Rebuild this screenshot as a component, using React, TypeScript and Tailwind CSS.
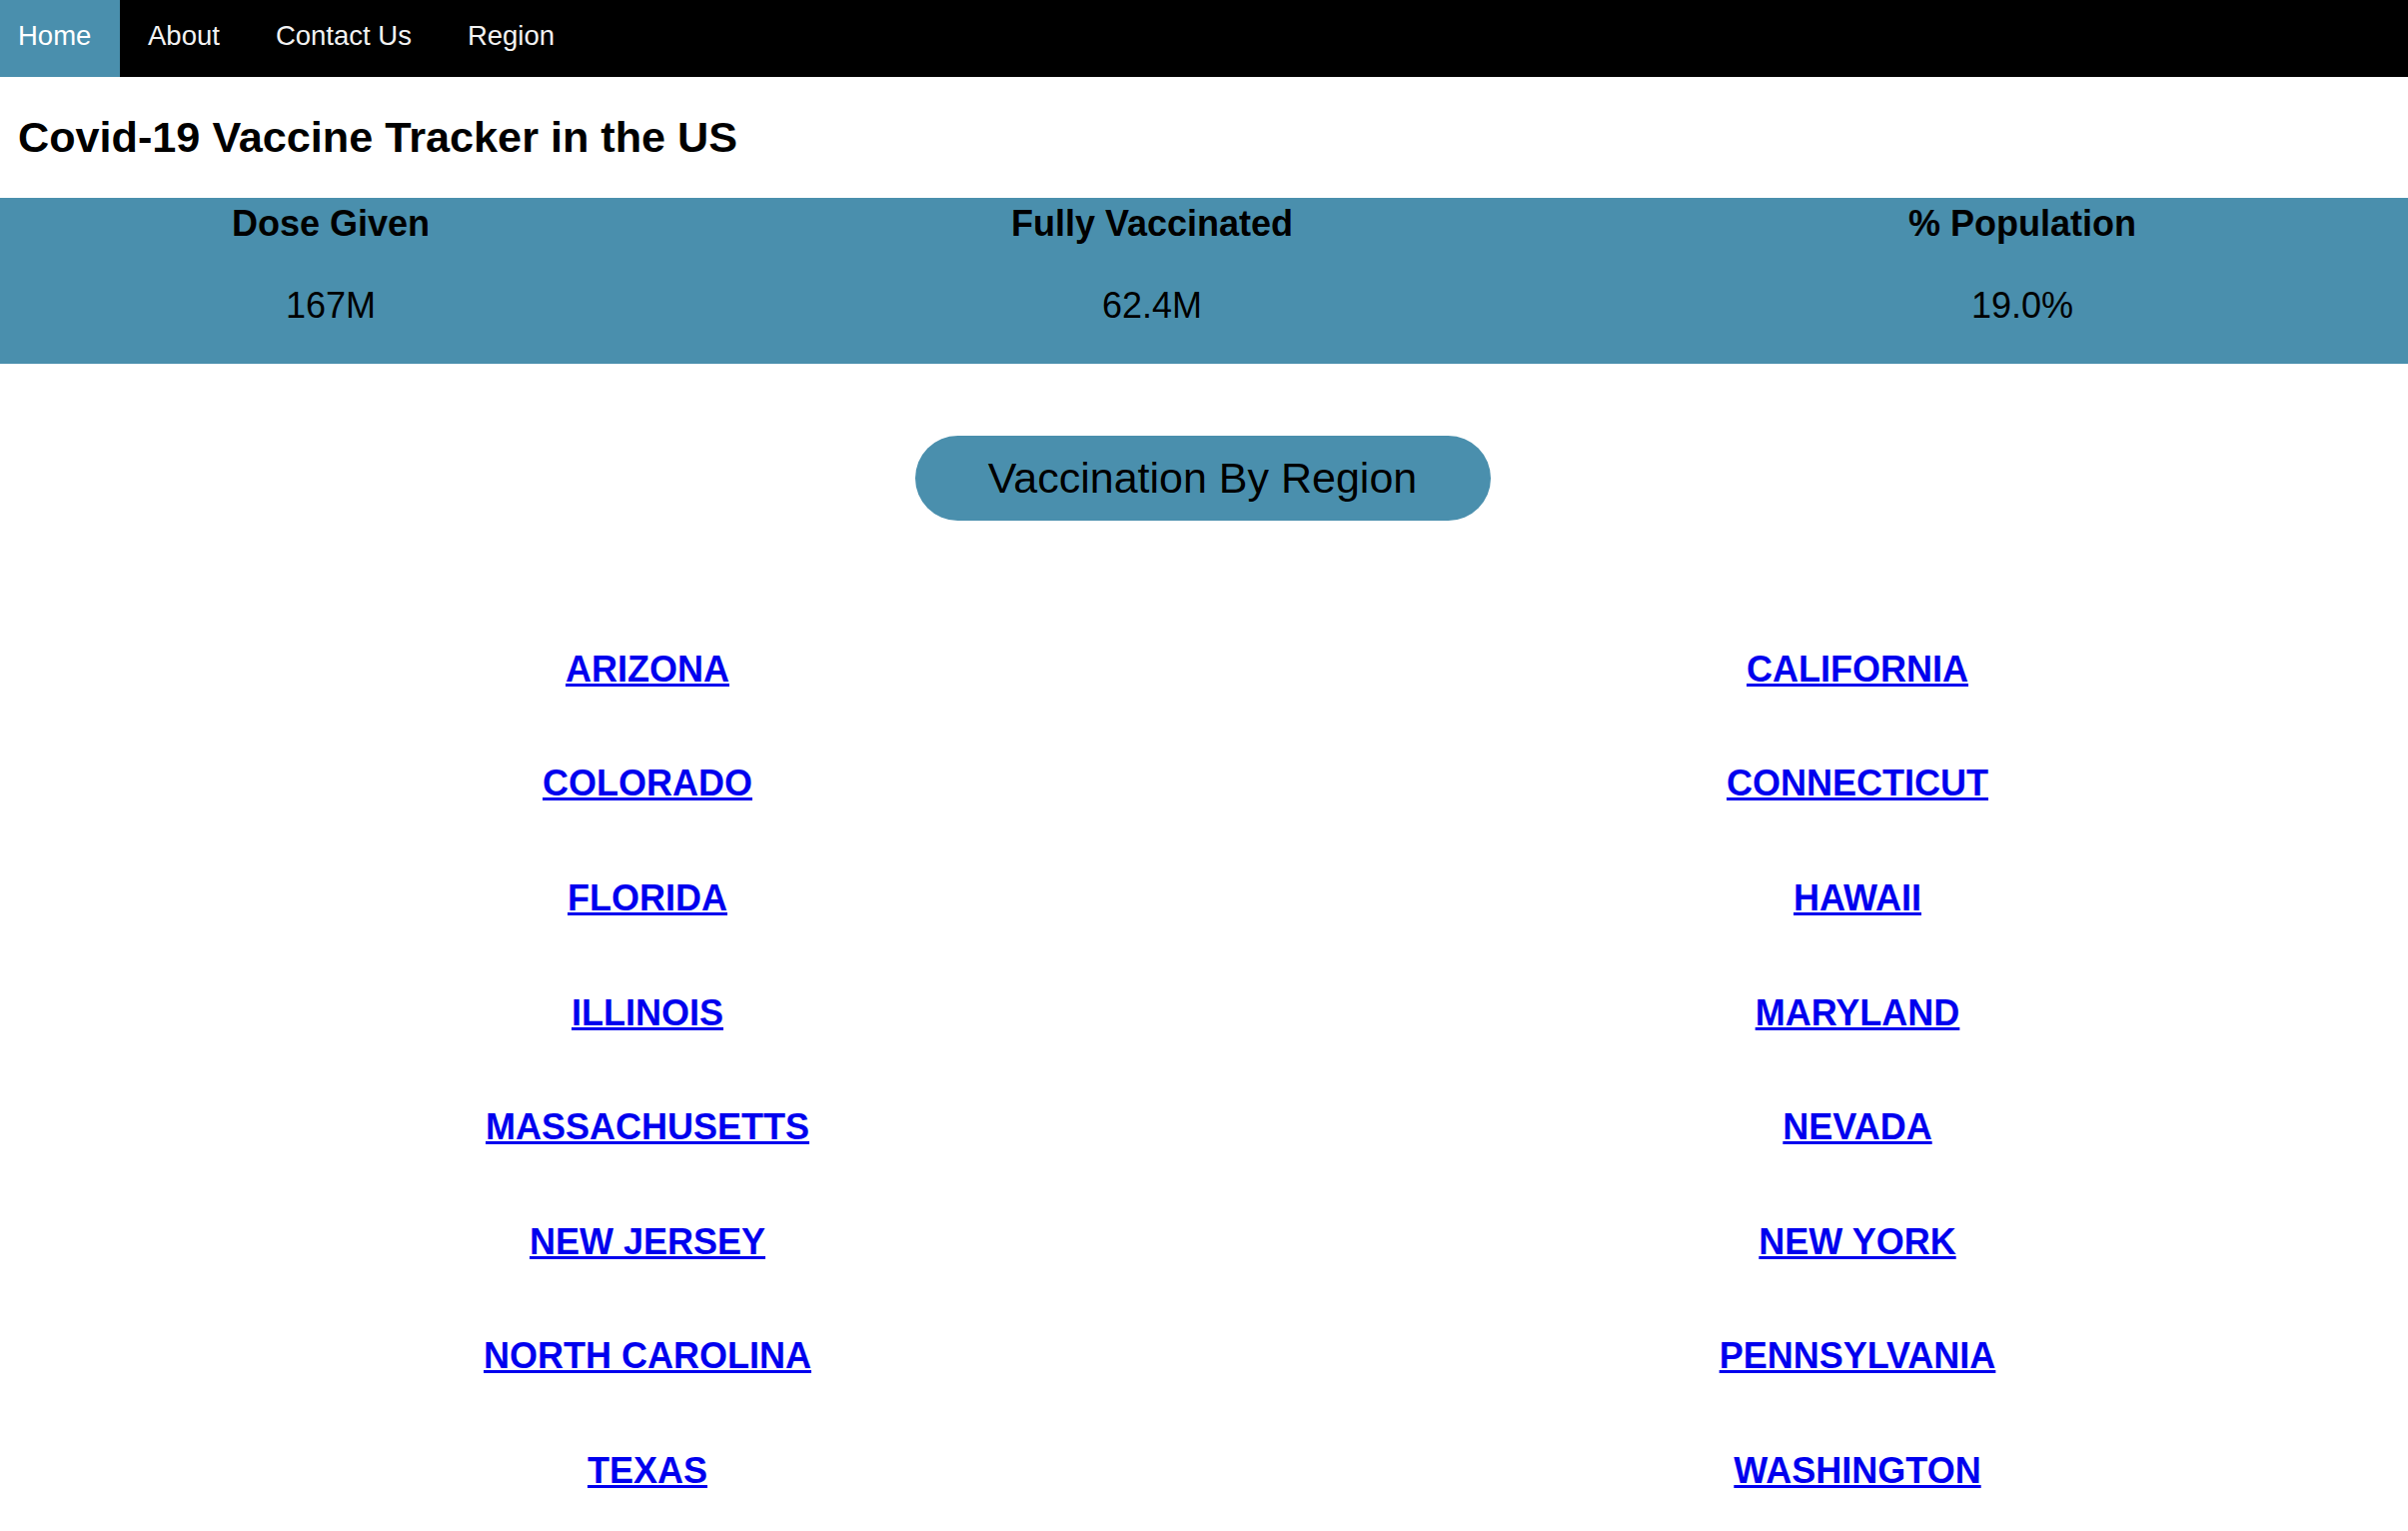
const navItems = ["Home", "About", "Contact Us", "Region"];

const stats = [
  { label: "Dose Given", value: "167M", width: "w-[662px]" },
  { label: "Fully Vaccinated", value: "62.4M", width: "w-[982px]" },
  { label: "% Population", value: "19.0%", width: "w-[760px]" },
];

const regions = [
  ["ARIZONA", "CALIFORNIA"],
  ["COLORADO", "CONNECTICUT"],
  ["FLORIDA", "HAWAII"],
  ["ILLINOIS", "MARYLAND"],
  ["MASSACHUSETTS", "NEVADA"],
  ["NEW JERSEY", "NEW YORK"],
  ["NORTH CAROLINA", "PENNSYLVANIA"],
  ["TEXAS", "WASHINGTON"],
];

const App = () => {
  return (
    <div className="min-h-screen bg-white font-['Liberation_Sans',Arial,sans-serif] text-black">
      <nav className="flex h-[77px] bg-black">
        {navItems.map((item, i) => (
          <a
            key={item}
            href="#"
            className={`h-full pt-[20px] text-[27.5px] leading-[31px] text-[#f2f2f2] ${
              i === 0 ? "w-[120px] bg-[#4a8fad] pl-[18px] text-white" : "px-[28px]"
            }`}
          >
            {item}
          </a>
        ))}
      </nav>

      <h1 className="mt-[36px] pl-[18px] text-[43.2px] font-bold leading-[49px]">
        Covid-19 Vaccine Tracker in the US
      </h1>

      <div className="mt-[36px] flex h-[166px] bg-[#4a8fad]">
        {stats.map((s) => (
          <div key={s.label} className={`${s.width} flex flex-col items-center pt-[5px]`}>
            <div className="text-[36px] font-bold leading-[41px]">{s.label}</div>
            <div className="mt-[41px] text-[36px] leading-[41px]">{s.value}</div>
          </div>
        ))}
      </div>

      <div className="mt-[72px] flex justify-center">
        <button className="ml-[-3px] h-[85px] w-[576px] rounded-full bg-[#4a8fad] text-[43px] leading-[49px] text-black">
          Vaccination By Region
        </button>
      </div>

      <div className="mt-[91px] grid grid-cols-[1296px_1fr] pb-[4px]">
        {regions.map((row) =>
          row.map((name, j) => (
            <div
              key={name}
              className={`flex h-[114.6px] items-center justify-center ${j === 1 ? "pl-[12px]" : ""}`}
            >
              <a href="#" className="text-[36px] font-bold leading-[41px] text-[#0000ee] underline">
                {name}
              </a>
            </div>
          ))
        )}
      </div>
    </div>
  );
};

export default App;
